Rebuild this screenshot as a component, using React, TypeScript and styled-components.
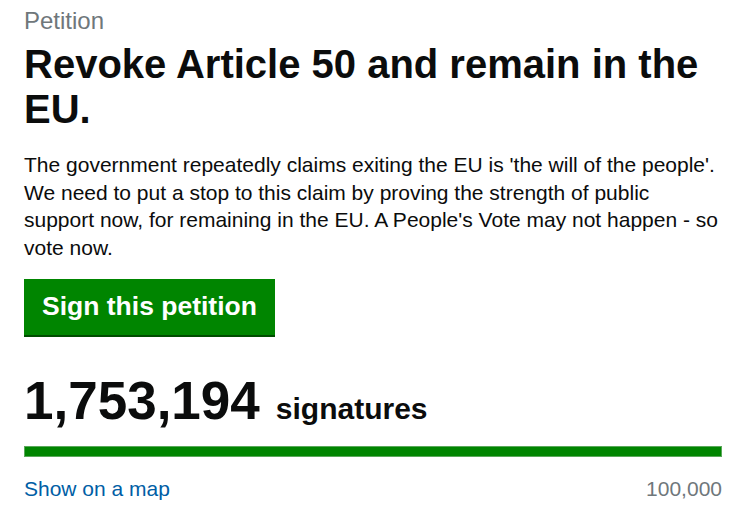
import React from 'react';
import styled, {createGlobalStyle} from 'styled-components';

const GlobalStyle = createGlobalStyle`
  body {
    margin: 0;
    background: #ffffff;
    font-family: "Liberation Sans", Arial, sans-serif;
    color: #0b0c0c;
  }
`

const App = () => {
    return (
        <Page>
            <GlobalStyle/>
            <Caption>Petition</Caption>
            <Title>Revoke Article 50 and remain in the EU.</Title>
            <Summary>
                The government repeatedly claims exiting the EU is 'the will of the people'. We need to put a
                stop to this claim by proving the strength of public support now, for remaining in the EU. A
                People's Vote may not happen - so vote now.
            </Summary>
            <SignButton>Sign this petition</SignButton>
            <Count>
                <CountNumber>1,753,194</CountNumber>
                <CountLabel>signatures</CountLabel>
            </Count>
            <Progress>
                <ProgressFill style={{width: '100%'}}/>
            </Progress>
            <Footer>
                <MapLink href="#">Show on a map</MapLink>
                <Threshold>100,000</Threshold>
            </Footer>
        </Page>
    );
};

export default App;

const Page = styled.main`
  padding: 6px 18px 0 24px;
`
const Caption = styled.span`
  display: block;
  font-size: 24px;
  line-height: 30px;
  color: #6f777b;
`
const Title = styled.h1`
  margin: 6px 0 0;
  font-weight: 700;
  font-size: 40px;
  line-height: 45px;
`
const Summary = styled.p`
  margin: 19px 0 0;
  font-size: 21px;
  line-height: 27.7px;
`
const SignButton = styled.button`
  display: block;
  margin-top: 17px;
  padding: 0 18px;
  height: 56px;
  border: none;
  border-radius: 0;
  background: #008500;
  box-shadow: 0 2px 0 #004d00;
  color: #ffffff;
  font-family: inherit;
  font-weight: 700;
  font-size: 26.5px;
  cursor: pointer;
`
const Count = styled.div`
  display: flex;
  align-items: baseline;
  margin-top: 36px;
`
const CountNumber = styled.span`
  font-weight: 700;
  font-size: 53px;
  line-height: 60px;
`
const CountLabel = styled.span`
  margin-left: 16px;
  font-weight: 700;
  font-size: 30px;
`
const Progress = styled.div`
  margin-top: 15px;
  height: 11px;
  background: #dee0e2;
`
const ProgressFill = styled.div`
  box-sizing: border-box;
  height: 100%;
  background: #008500;
  border: 1px solid #5aa85a;
`
const Footer = styled.div`
  display: flex;
  justify-content: space-between;
  align-items: baseline;
  margin-top: 18px;
  font-size: 21px;
  line-height: 27px;
`
const MapLink = styled.a`
  color: #005ea5;
  text-decoration: none;
`
const Threshold = styled.span`
  color: #6f777b;
`
